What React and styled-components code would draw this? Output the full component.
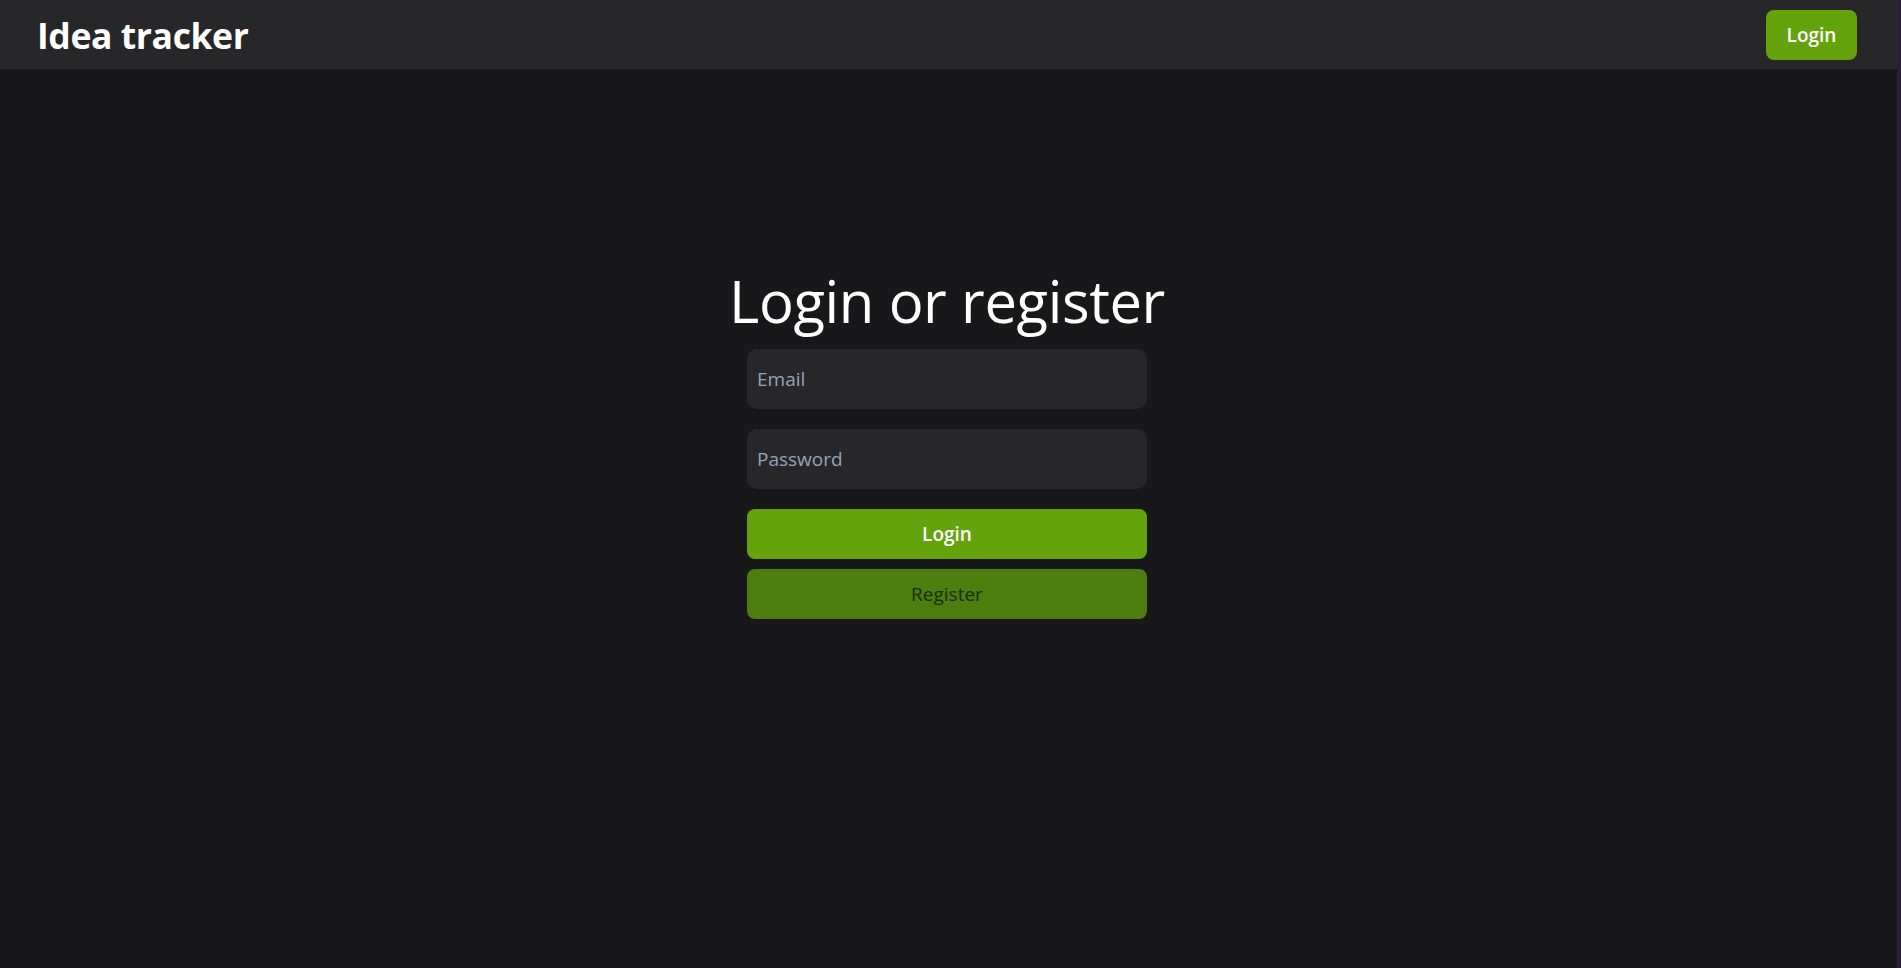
import React from "react";
import styled, { createGlobalStyle } from "styled-components";

///style///

const GlobalStyle = createGlobalStyle`
  html, body {
    margin: 0;
    padding: 0;
    height: 100%;
    background: #18181b;
  }
  #root {
    height: 100%;
  }
  * {
    box-sizing: border-box;
  }
`;

const AppWrapper = styled.div`
  display: flex;
  height: 100vh;
  font-family: "Open Sans", "Noto Sans", sans-serif;
  color: #ffffff;
`;

const Page = styled.div`
  flex: 1;
  display: flex;
  flex-direction: column;
  background: #18181b;
`;

const WindowEdge = styled.div`
  width: 4px;
  background: #2b1d36;
`;

const Header = styled.header`
  height: 69px;
  flex-shrink: 0;
  display: flex;
  align-items: center;
  justify-content: space-between;
  padding: 0 40px 0 37px;
  background: #27272a;
`;

const Brand = styled.h1`
  margin: 0;
  padding-top: 3px;
  font-size: 35.5px;
  font-weight: 700;
  letter-spacing: -0.4px;
  line-height: 1;
`;

const HeaderButton = styled.button`
  width: 91px;
  height: 50px;
  border: none;
  border-radius: 8px;
  background: #65a30d;
  color: #ffffff;
  font-family: inherit;
  font-size: 19px;
  font-weight: 600;
  cursor: pointer;
`;

const Main = styled.main`
  flex: 1;
  display: flex;
  flex-direction: column;
  align-items: center;
  padding: 202px 3px 0 0;
`;

const Title = styled.h2`
  margin: 0 0 18px;
  font-size: 58px;
  font-weight: 400;
  line-height: 60px;
  letter-spacing: -0.4px;
`;

const Form = styled.form`
  width: 400px;
  display: flex;
  flex-direction: column;
`;

const Field = styled.input`
  height: 60px;
  margin-bottom: 20px;
  padding: 0 10px;
  border: none;
  border-radius: 10px;
  background: #27272a;
  color: #ffffff;
  font-family: inherit;
  font-size: 19px;
  outline: none;

  &::placeholder {
    color: #94a3b8;
  }
`;

const ActionButton = styled.button`
  height: 50px;
  margin-bottom: 10px;
  border: none;
  border-radius: 8px;
  background: ${(p) => (p.secondary ? "#4d7c0f" : "#65a30d")};
  color: ${(p) => (p.secondary ? "#1a2e05" : "#ffffff")};
  font-family: inherit;
  font-size: 19px;
  font-weight: ${(p) => (p.secondary ? 400 : 600)};
  cursor: pointer;
`;

//style end//

export default function App() {
  return (
    <>
      <GlobalStyle />
      <AppWrapper>
        <Page>
          <Header>
            <Brand>Idea tracker</Brand>
            <HeaderButton type="button">Login</HeaderButton>
          </Header>
          <Main>
            <Title>Login or register</Title>
            <Form onSubmit={(e) => e.preventDefault()}>
              <Field type="email" placeholder="Email" />
              <Field type="password" placeholder="Password" />
              <ActionButton type="submit">Login</ActionButton>
              <ActionButton type="button" secondary>
                Register
              </ActionButton>
            </Form>
          </Main>
        </Page>
        <WindowEdge />
      </AppWrapper>
    </>
  );
}
